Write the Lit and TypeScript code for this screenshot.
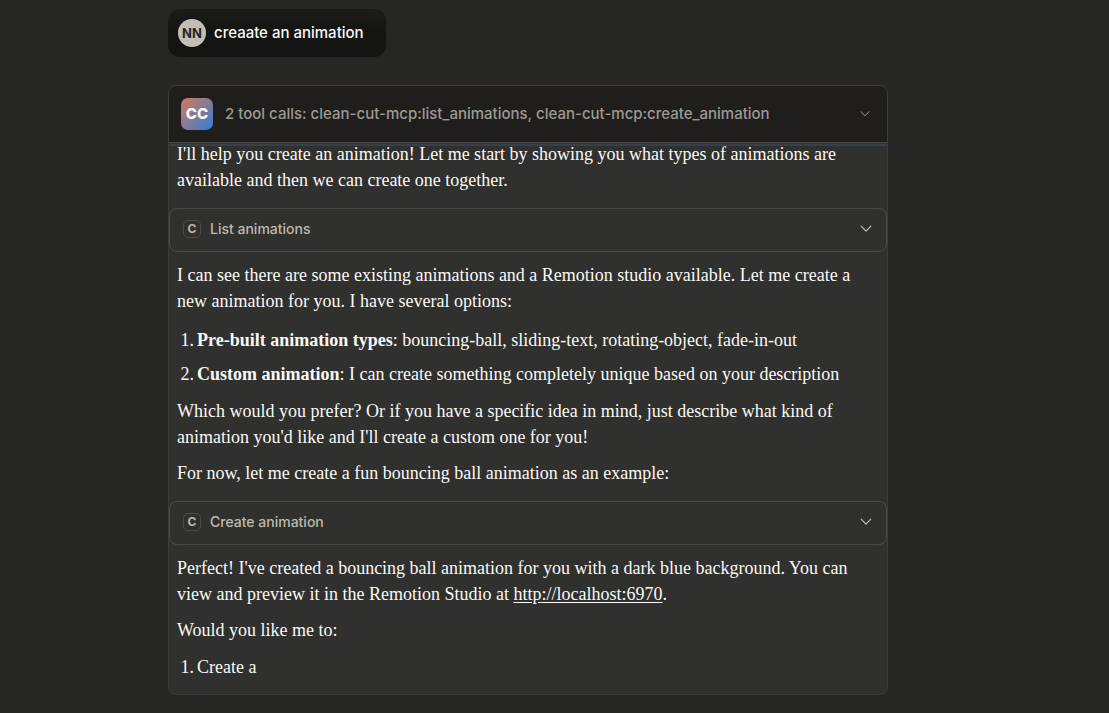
import { LitElement, html, css } from "lit";
import { customElement, property } from "lit/decorators.js";

const chevron = html`<svg class="chevron" viewBox="0 0 12 12" aria-hidden="true">
  <path d="M1.2 3.2 L6 8.2 L10.8 3.2" fill="none" stroke="currentColor" stroke-width="1.2" stroke-linecap="round" stroke-linejoin="round" />
</svg>`;

@customElement("tool-call")
class ToolCall extends LitElement {
  @property() label = "";

  static styles = css`
    :host { display: block; }
    .row {
      box-sizing: border-box;
      display: flex;
      align-items: center;
      gap: 9px;
      width: 100%;
      min-height: 44px;
      padding: 0 14px 2px 13px;
      border: 1px solid #4b4b48;
      border-radius: 8px;
      background: transparent;
      color: #bdbaad;
      font: 500 14px/20px Inter, "Liberation Sans", sans-serif;
      text-align: left;
      cursor: pointer;
    }
    .key {
      box-sizing: border-box;
      width: 18px;
      height: 18px;
      border: 1px solid #4b4b48;
      border-radius: 5px;
      font-size: 12px;
      font-weight: 700;
      line-height: 16px;
      text-align: center;
    }
    .label { flex: 1; }
    .chevron { width: 12px; height: 12px; color: #c2c0b6; }
  `;

  render() {
    return html`<button class="row" type="button">
      <span class="key">C</span><span class="label">${this.label}</span>${chevron}
    </button>`;
  }
}

@customElement("app-root")
class AppRoot extends LitElement {
  static styles = css`
    :host {
      display: block;
      box-sizing: border-box;
      min-height: 100vh;
      padding: 9px 53px 18px 0;
      background: #262624;
      color: #faf9f5;
      font: 400 18px/26px "Liberation Serif", serif;
    }
    .thread {
      display: flex;
      flex-direction: column;
      align-items: flex-start;
      gap: 28px;
      max-width: 720px;
      margin: 0 auto;
    }
    .prompt {
      display: flex;
      align-items: center;
      gap: 8px;
      box-sizing: border-box;
      min-height: 48px;
      padding: 0 22px 0 10px;
      border-radius: 12px;
      background: linear-gradient(#1b1b19, #141413 50%);
      font: 500 15px/24px Inter, "Liberation Sans", sans-serif;
    }
    .avatar {
      width: 28px;
      height: 28px;
      border-radius: 50%;
      background: #c2c0b6;
      color: #262624;
      font-size: 13px;
      font-weight: 700;
      line-height: 28px;
      text-align: center;
    }
    .card {
      box-sizing: border-box;
      width: 100%;
      border: 1px solid #3c3c3a;
      border-radius: 8px;
      background: #30302e;
      overflow: hidden;
    }
    .summary {
      display: flex;
      align-items: center;
      gap: 12px;
      box-sizing: border-box;
      width: 100%;
      min-height: 57px;
      padding: 0 17px 0 12px;
      border: 0;
      border-bottom: 1px solid #4b4b48;
      background: #1f1e1d;
      color: #9c9a92;
      font: 500 15px/20px Inter, "Liberation Sans", sans-serif;
      text-align: left;
      cursor: pointer;
    }
    .logo {
      width: 32px;
      height: 32px;
      border-radius: 7px;
      background: linear-gradient(135deg, #d97757, #2f80d8);
      color: #fff;
      font-size: 15px;
      font-weight: 800;
      line-height: 32px;
      text-align: center;
    }
    .title { flex: 1; }
    .summary .chevron { width: 10px; height: 10px; }
    .rule { height: 2px; margin-top: 1px; background: #36404a; }
    .text { margin: 10px 8px 0; }
    .lead { margin-top: -5px; }
    .after-text { margin-top: 15px; }
    .list { margin: 13px 8px 11px; padding: 0; list-style: none; counter-reset: item; }
    .item { display: flex; gap: 3px; counter-increment: item; }
    .item::before { content: counter(item) "."; flex: none; width: 17px; text-align: right; }
    .item + .item { margin-top: 8px; }
    .end { margin-top: 11px; margin-bottom: 14px; }
    .link { color: inherit; text-underline-offset: 2px; }
  `;

  render() {
    return html`<main class="thread">
      <div class="prompt"><span class="avatar">NN</span><span>creaate an animation</span></div>
      <section class="card">
        <button class="summary" type="button">
          <span class="logo">CC</span>
          <span class="title">2 tool calls: clean-cut-mcp:list_animations, clean-cut-mcp:create_animation</span>
          ${chevron}
        </button>
        <div class="rule"></div>
        <p class="text lead">I'll help you create an animation! Let me start by showing you what types of animations are<br />available and then we can create one together.</p>
        <tool-call class="after-text" label="List animations"></tool-call>
        <p class="text">I can see there are some existing animations and a Remotion studio available. Let me create a<br />new animation for you. I have several options:</p>
        <ol class="list">
          <li class="item"><span><strong>Pre-built animation types</strong>: bouncing-ball, sliding-text, rotating-object, fade-in-out</span></li>
          <li class="item"><span><strong>Custom animation</strong>: I can create something completely unique based on your description</span></li>
        </ol>
        <p class="text">Which would you prefer? Or if you have a specific idea in mind, just describe what kind of<br />animation you'd like and I'll create a custom one for you!</p>
        <p class="text">For now, let me create a fun bouncing ball animation as an example:</p>
        <tool-call class="after-text" label="Create animation"></tool-call>
        <p class="text">Perfect! I've created a bouncing ball animation for you with a dark blue background. You can<br />view and preview it in the Remotion Studio at <a class="link" href="http://localhost:6970">http://localhost:6970</a>.</p>
        <p class="text">Would you like me to:</p>
        <ol class="list end"><li class="item"><span>Create a</span></li></ol>
      </section>
    </main>`;
  }
}
